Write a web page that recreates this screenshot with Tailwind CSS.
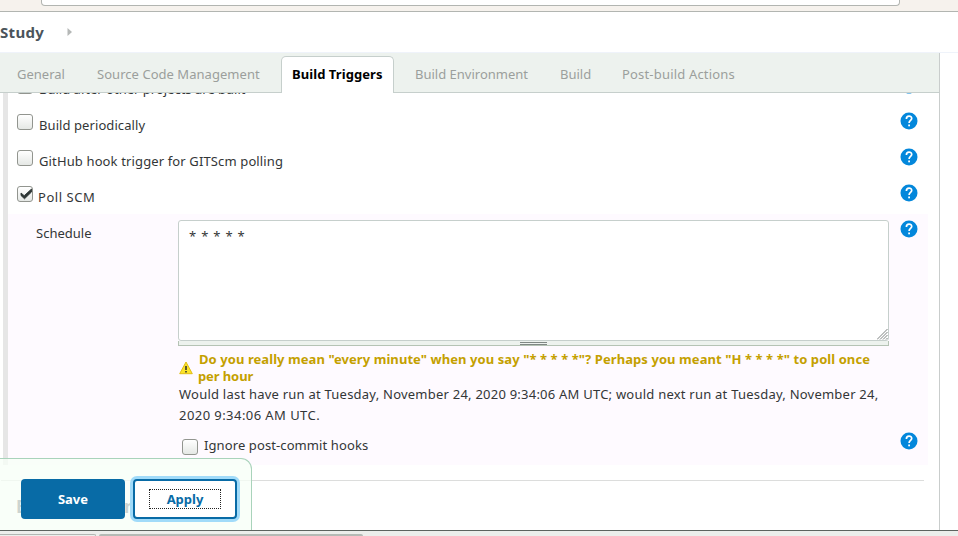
<!DOCTYPE html>
<html lang="en">
<head>
<meta charset="utf-8">
<title>Study Config</title>
<script src="https://cdn.jsdelivr.net/npm/@tailwindcss/browser@4"></script>
</head>
<body class="w-[958px] h-[536px] overflow-hidden bg-white font-['Noto_Sans','Open_Sans',sans-serif] text-[13px] leading-[18px] text-[#333637]">
<svg class="hidden">
  <symbol id="help" viewBox="0 0 18 18"><circle cx="9" cy="9" r="8.5" fill="#0387db"/><path d="M6.4 6.9C6.4 3.2 11.7 3.3 11.7 6.5C11.7 8.4 9.1 8.6 9.1 11.1" fill="none" stroke="#fff" stroke-width="1.7"/><rect x="8.2" y="12.5" width="1.8" height="1.8" fill="#fff"/></symbol>
</svg>
<div class="flex flex-col h-[536px]">
  <div class="h-3 shrink-0 bg-[#f6f2ed] border-b border-[#b2b5b1] flex">
    <div class="ml-[41px] w-[859px] h-[6px] bg-white border border-t-0 border-[#b2b5b1] rounded-b-[4px]"></div>
  </div>
  <header class="h-[41px] shrink-0 border-b border-[#eff3fa] flex items-center">
    <span class="w-[67px] font-bold text-[15px] text-[#4b545b] whitespace-nowrap tracking-[0.3px]">Study</span>
    <svg class="w-[5px] h-[8px]" viewBox="0 0 5 8"><path d="M0.5 0L5 4L0.5 8Z" fill="#b5b8b7"/></svg>
  </header>
  <main class="relative w-[940px] h-[477px] shrink-0 border-r border-[#c9cdcc] overflow-hidden flex flex-col">
    <nav class="h-10 shrink-0 bg-[#edf2ee] border-b border-[#c6cfcc] flex items-end text-[#9b9f9c] whitespace-nowrap">
      <div class="w-[80px] pl-[17px] pb-[9px]">General</div>
      <div class="w-[184px] pl-[17px] pb-[9px] tracking-[0.04px]">Source Code Management</div>
      <div class="w-[17px]"></div>
      <div class="w-[113px] h-[37px] -mb-px bg-white border border-b-0 border-[#c6cfcc] rounded-t-[5px] pl-[10px] pt-[8px] font-bold text-black tracking-[0.07px]">Build Triggers</div>
      <div class="w-[145px] pl-[21px] pb-[9px]">Build Environment</div>
      <div class="w-[62px] pl-[21px] pb-[9px]">Build</div>
      <div class="pl-[21px] pb-[9px] tracking-[0.18px]">Post-build Actions</div>
    </nav>
    <div class="flex-1 overflow-hidden">
      <div class="ml-[3px] h-[372px] border-l-[5px] border-[#e6e6e6] overflow-hidden">
        <div class="-mt-[22px]">
          <div class="h-9 flex pl-[9px] pr-[21px]"><i class="mt-[7px] size-4 rounded-[3px] border border-[#92958f] bg-linear-to-b from-white to-[#e5e8e5]"></i><span class="ml-[6px] mt-[9px]">Build after other projects are built</span><svg class="ml-auto mt-[5px] size-[18px]"><use href="#help"/></svg></div>
          <div class="h-9 flex pl-[9px] pr-[21px]"><i class="mt-[7px] size-4 rounded-[3px] border border-[#92958f] bg-linear-to-b from-white to-[#e5e8e5]"></i><span class="ml-[6px] mt-[9px] tracking-[0.08px]">Build periodically</span><svg class="ml-auto mt-[5px] size-[18px]"><use href="#help"/></svg></div>
          <div class="h-9 flex pl-[9px] pr-[21px]"><i class="mt-[7px] size-4 rounded-[3px] border border-[#92958f] bg-linear-to-b from-white to-[#e5e8e5]"></i><span class="ml-[6px] mt-[9px] tracking-[0.13px]">GitHub hook trigger for GITScm polling</span><svg class="ml-auto mt-[5px] size-[18px]"><use href="#help"/></svg></div>
          <div class="h-[35px] flex pl-[9px] pr-[21px]"><i class="mt-[7px] size-4 rounded-[3px] border border-[#92958f] bg-linear-to-b from-white to-[#e5e8e5]"><svg class="size-[14px]" viewBox="0 0 14 14"><path d="M3 6L6.2 8.7L13.5 2V5L6.5 11.8L3 8.5Z" fill="#2d3634" stroke="#2d3634" stroke-width=".9"/></svg></i><span class="ml-[5px] mt-[9px] tracking-[0.55px]">Poll SCM</span><svg class="ml-auto mt-[5px] size-[18px]"><use href="#help"/></svg></div>
        </div>
        <section class="w-[920px] h-[251px] bg-[#fefaff] flex">
          <div class="w-[170px] pl-7 pt-[10px]">Schedule</div>
          <div class="w-[711px] pt-[6px]">
            <div class="relative h-[121px] bg-white border border-[#c6cfcc] rounded-[3px] pl-[10px] pt-[6px]"><span class="tracking-[0.8px]">* * * * *</span>
              <svg class="absolute right-0 bottom-0 size-[11px]" viewBox="0 0 11 11" stroke="#7d8180" stroke-width="1"><path d="M0 10.5L10.5 0M3 10.5L10.5 3M6 10.5L10.5 6M9 10.5L10.5 9"/></svg>
            </div>
            <div class="h-[5px] bg-[#edf2ee] border border-t-0 border-[#b5c3b5] flex justify-center"><div class="w-[27px] h-[3px] mt-px border-y border-[#7f8784]"></div></div>
            <div class="mt-[5px] pl-px flex font-bold text-[#c4a000] leading-[17px] whitespace-nowrap">
              <svg class="w-[14px] h-[14px] mt-[10px] mr-[5px]" viewBox="0 0 14 14"><path d="M7 1L13.3 12.7H.7Z" fill="#fbe32a" stroke="#e0bd14" stroke-linejoin="round"/><path d="M7 5V9M7 10V11.5" stroke="#41402b" stroke-width="1.7"/></svg>
              <p><span class="ml-px tracking-[0.07px]">Do you really mean "every minute" when you say "* * * * *"? Perhaps you meant "H * * * *" to poll once</span><br><span class="tracking-[-0.1px]">per hour</span></p>
            </div>
            <p class="leading-[21px] whitespace-nowrap -mt-px pl-px"><span class="tracking-[0.23px]">Would last have run at Tuesday, November 24, 2020 9:34:06 AM UTC; would next run at Tuesday, November 24,</span><br><span class="tracking-[0.44px]">2020 9:34:06 AM UTC.</span></p>
            <div class="flex mt-[10px] pl-1"><i class="mt-[3px] size-4 rounded-[3px] border border-[#92958f] bg-linear-to-b from-white to-[#e5e8e5]"></i><span class="ml-[6px] tracking-[0.1px]">Ignore post-commit hooks</span></div>
          </div>
          <div class="pl-[11px] pt-[6px] flex flex-col gap-[194px]"><svg class="size-[18px]"><use href="#help"/></svg><svg class="size-[18px]"><use href="#help"/></svg></div>
        </section>
      </div>
      <div class="ml-px w-[923px] h-4 border-b border-[#dcdddc]"></div>
      <h2 class="pl-4 pt-[13px] text-[18px] leading-6 font-bold text-[#4b545b] whitespace-nowrap tracking-[0.1px]">Build Environ</h2>
    </div>
    <div class="absolute left-0 bottom-0 w-[252px] h-[72px] bg-[#f7fff7]/75 border-t border-r border-[#a9d3bb] rounded-tr-[11px] pl-[21px] pt-5 flex gap-2 font-bold">
      <div class="w-[104px] h-10 rounded-[4px] bg-[#086ba6] text-white flex items-center justify-center">Save</div>
      <div class="w-[104px] h-10 rounded-[4px] bg-white text-[#086ba6] border-2 border-[#086ba6] ring-3 ring-[#a1dbf9] flex items-center justify-center"><span class="w-[72px] h-5 border border-dotted border-[#222] leading-[18px] text-center">Apply</span></div>
    </div>
  </main>
  <footer class="h-[6px] shrink-0 bg-[#eceeeb] border-t border-[#5d635f] flex items-end">
    <div class="w-[96px] h-[2px] border-t border-r border-[#b2b7b3] rounded-tr-[2px]"></div>
    <div class="ml-[3px] w-[264px] h-[2px] bg-[#b5bab5] rounded-t-[2px]"></div>
  </footer>
</div>
</body>
</html>
